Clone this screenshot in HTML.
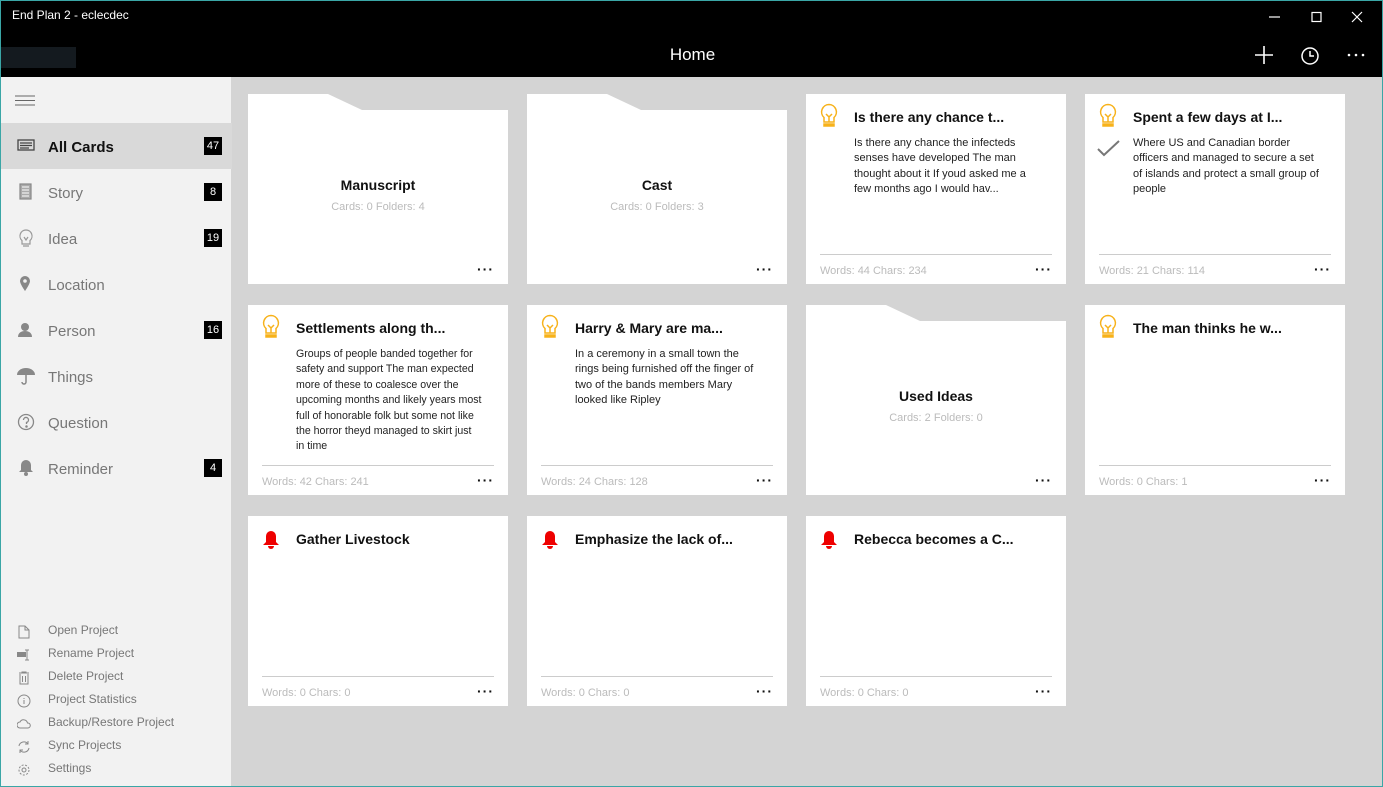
<!DOCTYPE html>
<html><head><meta charset="utf-8"><style>
*{margin:0;padding:0;box-sizing:border-box}
body{width:1383px;height:787px;overflow:hidden;background:#d4d4d4;font-family:"Segoe UI","Liberation Sans",sans-serif;position:relative}
.a{position:absolute}
#top{left:0;top:0;width:1383px;height:77px;background:#000;border:1px solid #3aa6a6;border-bottom:none}
#side{left:0;top:77px;width:231px;height:710px;background:#f2f2f2;border-left:1px solid #3aa6a6;border-bottom:1px solid #3aa6a6}
.nav{left:0;width:231px;height:46px;font-size:15px;color:#777;line-height:49px;padding-left:47px}
.nav svg{position:absolute;left:16px;top:14px}
.badge{position:absolute;right:10px;top:14px;background:#000;color:#fff;font-size:11px;line-height:18px;height:18px;min-width:18px;text-align:center;padding:0 2px;font-weight:normal}
.bot{left:47px;font-size:12px;color:#777}
.bot svg{position:absolute;left:-31px;top:2px}
.card{width:260px;height:190px;background:#fff}
.ic{position:absolute;left:13px;top:9px}
.t{position:absolute;left:48px;top:15px;font-size:14px;font-weight:bold;color:#111;white-space:nowrap}
.b{position:absolute;left:48px;top:42px;width:186px;font-size:11px;line-height:15.4px;color:#222}
.hr{position:absolute;left:14px;right:14px;top:160px;height:1px;background:#ccc}
.f{position:absolute;left:14px;top:171px;font-size:11px;color:#bbb}
.d{position:absolute;right:14px;top:167px;font-size:14px;color:#111;letter-spacing:1px;font-weight:bold}
.fold{background:none}
.fold .t2{position:absolute;left:0;width:260px;top:83px;text-align:center;font-size:14px;font-weight:bold;color:#111}
.fold .s{position:absolute;left:0;width:260px;top:107px;text-align:center;font-size:11px;color:#bbb}
</style></head><body>
<div id="top" class="a">
<div class="a" style="left:11px;top:7px;color:#fff;font-size:12px">End Plan 2 - eclecdec</div>
<div class="a" style="left:0;top:46px;width:75px;height:21px;background:#141a1f"></div>
<div class="a" style="left:0;top:44px;width:1383px;text-align:center;color:#fff;font-size:17px">Home</div>
<svg class="a" style="left:1250px;top:8px" width="120" height="60" fill="none" stroke="#fff" stroke-width="1.2">
<path d="M18 8h11"/><rect x="61" y="3.5" width="9" height="9"/><path d="M101 3l10 10M111 3l-10 10"/>
<path d="M4 46h18M13 37v18" stroke-width="1.6"/>
<circle cx="59" cy="47" r="8" stroke-width="1.5"/><path d="M59 42v5h4" stroke-width="1.5"/>
<g fill="#fff" stroke="none"><circle cx="98" cy="46" r="1.3"/><circle cx="105" cy="46" r="1.3"/><circle cx="112" cy="46" r="1.3"/></g>
</svg>
</div>
<div id="side" class="a">
<svg class="a" style="left:14px;top:18px" width="20" height="12" stroke="#666" stroke-width="1"><path d="M0 1h20M0 5.5h20M0 10h20"/></svg>
<div class="a nav" style="top:46px;background:#d9d9d9;color:#111;font-weight:bold"><svg width="18" height="16" fill="none" stroke="#444" stroke-width="1.3"><rect x="1" y="3" width="16" height="10"/><path d="M3 6h12M3 8.5h12M3 11h9"/></svg>All Cards<span class="badge">47</span></div>
<div class="a nav" style="top:92px"><svg width="18" height="18" fill="none" stroke="#888" stroke-width="1.2"><rect x="3" y="1" width="11" height="15" fill="#aaa"/><path d="M5 4h7M5 7h7M5 10h7M5 13h7" stroke="#eee"/></svg>Story<span class="badge">8</span></div>
<div class="a nav" style="top:138px"><svg width="18" height="20" fill="none" stroke="#999" stroke-width="1.2"><path d="M9 1a6 6 0 0 0-4 10.5V15h8v-3.5A6 6 0 0 0 9 1zM6 17h6M7 8l2 3 2-3"/></svg>Idea<span class="badge">19</span></div>
<div class="a nav" style="top:184px"><svg width="18" height="18"><path d="M8 1a5 5 0 0 1 5 5c0 3-5 10-5 10S3 9 3 6a5 5 0 0 1 5-5z" fill="#888"/><circle cx="8" cy="6" r="1.8" fill="#f2f2f2"/></svg>Location</div>
<div class="a nav" style="top:230px"><svg width="18" height="18" fill="#888"><circle cx="8" cy="6" r="4"/><path d="M1 16c0-4 3-6 7-6s7 2 7 6z"/></svg>Person<span class="badge">16</span></div>
<div class="a nav" style="top:276px"><svg width="18" height="18" fill="#888"><path d="M0 8a9 7 0 0 1 18 0z"/><path d="M9 8v7a2 2 0 0 1-4 0" fill="none" stroke="#888" stroke-width="1.5"/></svg>Things</div>
<div class="a nav" style="top:322px"><svg width="18" height="18" fill="none" stroke="#888" stroke-width="1.3"><circle cx="9" cy="9" r="7.5"/><path d="M6.5 7a2.5 2.5 0 1 1 3 2.4V11"/><circle cx="9.5" cy="13.5" r=".6" fill="#888"/></svg>Question</div>
<div class="a nav" style="top:368px"><svg width="18" height="18" fill="#888"><path d="M9 1a5 5 0 0 1 5 5v5l2 2H2l2-2V6a5 5 0 0 1 5-5z"/><circle cx="9" cy="15" r="2"/></svg>Reminder<span class="badge">4</span></div>
<div class="a bot" style="top:546px"><svg width="14" height="14" fill="none" stroke="#888"><path d="M2 1h6l4 4v8H2zM8 1v4h4"/></svg>Open Project</div>
<div class="a bot" style="top:569px"><svg width="14" height="14" fill="#888"><rect x="0" y="4" width="9" height="5"/><path d="M10 2v10M8 2h4M8 12h4" stroke="#888" fill="none"/></svg>Rename Project</div>
<div class="a bot" style="top:592px"><svg width="14" height="14" fill="none" stroke="#888"><path d="M2 2h10M5 2V1h4v1M3 3v10h8V3M5.5 5v6M8.5 5v6"/></svg>Delete Project</div>
<div class="a bot" style="top:615px"><svg width="14" height="14" fill="none" stroke="#888"><circle cx="7" cy="7" r="6"/><path d="M7 6v4M7 4v1"/></svg>Project Statistics</div>
<div class="a bot" style="top:638px"><svg width="14" height="14" fill="none" stroke="#888"><path d="M3 11a3 3 0 0 1 0-6 4 4 0 0 1 7.5 1A2.5 2.5 0 0 1 11 11z"/></svg>Backup/Restore Project</div>
<div class="a bot" style="top:661px"><svg width="14" height="14" fill="none" stroke="#888"><path d="M2 6a5 5 0 0 1 9-2M12 8a5 5 0 0 1-9 2M11 1v3H8M3 13v-3h3"/></svg>Sync Projects</div>
<div class="a bot" style="top:684px"><svg width="14" height="14" fill="none" stroke="#888"><circle cx="7" cy="7" r="2"/><circle cx="7" cy="7" r="5" stroke-dasharray="2 1.5"/></svg>Settings</div>
</div>

<div class="a card fold" style="left:248px;top:94px"><svg class="a" width="260" height="190"><polygon points="0,0 80,0 114,16 260,16 260,190 0,190" fill="#fff"/></svg><div class="t2">Manuscript</div><div class="s">Cards: 0 Folders: 4</div><div class="d">···</div></div>
<div class="a card fold" style="left:527px;top:94px"><svg class="a" width="260" height="190"><polygon points="0,0 80,0 114,16 260,16 260,190 0,190" fill="#fff"/></svg><div class="t2">Cast</div><div class="s">Cards: 0 Folders: 3</div><div class="d">···</div></div>
<div class="a card" style="left:806px;top:94px"><svg class="ic" width="20" height="26" fill="none" stroke="#f7b21b" stroke-width="1.5"><path d="M10 1.5a7.5 7.5 0 0 0-5 13V19h10v-4.5a7.5 7.5 0 0 0-5-13zM7 11l3 3 3-3M10 14v5"/><path d="M5 21h10v2H5z" fill="#f7b21b"/></svg><div class="t">Is there any chance t...</div><div class="b">Is there any chance the infecteds senses have developed The man thought about it If youd asked me a few months ago I would hav...</div><div class="hr"></div><div class="f">Words: 44 Chars: 234</div><div class="d">···</div></div>
<div class="a card" style="left:1085px;top:94px"><svg class="ic" width="20" height="26" fill="none" stroke="#f7b21b" stroke-width="1.5"><path d="M10 1.5a7.5 7.5 0 0 0-5 13V19h10v-4.5a7.5 7.5 0 0 0-5-13zM7 11l3 3 3-3M10 14v5"/><path d="M5 21h10v2H5z" fill="#f7b21b"/></svg><svg class="a" style="left:12px;top:46px" width="24" height="18" fill="none" stroke="#777" stroke-width="2"><path d="M1 9l6 6L22 1"/></svg><div class="t">Spent a few days at I...</div><div class="b">Where US and Canadian border officers and managed to secure a set of islands and protect a small group of people</div><div class="hr"></div><div class="f">Words: 21 Chars: 114</div><div class="d">···</div></div>

<div class="a card" style="left:248px;top:305px"><svg class="ic" width="20" height="26" fill="none" stroke="#f7b21b" stroke-width="1.5"><path d="M10 1.5a7.5 7.5 0 0 0-5 13V19h10v-4.5a7.5 7.5 0 0 0-5-13zM7 11l3 3 3-3M10 14v5"/><path d="M5 21h10v2H5z" fill="#f7b21b"/></svg><div class="t">Settlements along th...</div><div class="b" style="font-size:10.6px">Groups of people banded together for safety and support The man expected more of these to coalesce over the upcoming months and likely years most full of honorable folk but some not like the horror theyd managed to skirt just in time</div><div class="hr"></div><div class="f">Words: 42 Chars: 241</div><div class="d">···</div></div>
<div class="a card" style="left:527px;top:305px"><svg class="ic" width="20" height="26" fill="none" stroke="#f7b21b" stroke-width="1.5"><path d="M10 1.5a7.5 7.5 0 0 0-5 13V19h10v-4.5a7.5 7.5 0 0 0-5-13zM7 11l3 3 3-3M10 14v5"/><path d="M5 21h10v2H5z" fill="#f7b21b"/></svg><div class="t">Harry &amp; Mary are ma...</div><div class="b">In a ceremony in a small town the rings being furnished off the finger of two of the bands members Mary looked like Ripley</div><div class="hr"></div><div class="f">Words: 24 Chars: 128</div><div class="d">···</div></div>
<div class="a card fold" style="left:806px;top:305px"><svg class="a" width="260" height="190"><polygon points="0,0 80,0 114,16 260,16 260,190 0,190" fill="#fff"/></svg><div class="t2">Used Ideas</div><div class="s">Cards: 2 Folders: 0</div><div class="d">···</div></div>
<div class="a card" style="left:1085px;top:305px"><svg class="ic" width="20" height="26" fill="none" stroke="#f7b21b" stroke-width="1.5"><path d="M10 1.5a7.5 7.5 0 0 0-5 13V19h10v-4.5a7.5 7.5 0 0 0-5-13zM7 11l3 3 3-3M10 14v5"/><path d="M5 21h10v2H5z" fill="#f7b21b"/></svg><div class="t">The man thinks he w...</div><div class="hr"></div><div class="f">Words: 0 Chars: 1</div><div class="d">···</div></div>

<div class="a card" style="left:248px;top:516px"><svg class="ic" style="left:14px;top:14px" width="18" height="20" fill="#e00"><path d="M9 1a5 5 0 0 1 5 5v6l3 3H1l3-3V6a5 5 0 0 1 5-5z"/><path d="M6 16h6a3 3 0 0 1-6 0z"/></svg><div class="t">Gather Livestock</div><div class="hr"></div><div class="f">Words: 0 Chars: 0</div><div class="d">···</div></div>
<div class="a card" style="left:527px;top:516px"><svg class="ic" style="left:14px;top:14px" width="18" height="20" fill="#e00"><path d="M9 1a5 5 0 0 1 5 5v6l3 3H1l3-3V6a5 5 0 0 1 5-5z"/><path d="M6 16h6a3 3 0 0 1-6 0z"/></svg><div class="t">Emphasize the lack of...</div><div class="hr"></div><div class="f">Words: 0 Chars: 0</div><div class="d">···</div></div>
<div class="a card" style="left:806px;top:516px"><svg class="ic" style="left:14px;top:14px" width="18" height="20" fill="#e00"><path d="M9 1a5 5 0 0 1 5 5v6l3 3H1l3-3V6a5 5 0 0 1 5-5z"/><path d="M6 16h6a3 3 0 0 1-6 0z"/></svg><div class="t">Rebecca becomes a C...</div><div class="hr"></div><div class="f">Words: 0 Chars: 0</div><div class="d">···</div></div>
<div class="a" style="right:0;top:0;width:1px;height:787px;background:#3aa6a6"></div>
<div class="a" style="left:0;bottom:0;width:1383px;height:1px;background:#3aa6a6"></div>
</body></html>
